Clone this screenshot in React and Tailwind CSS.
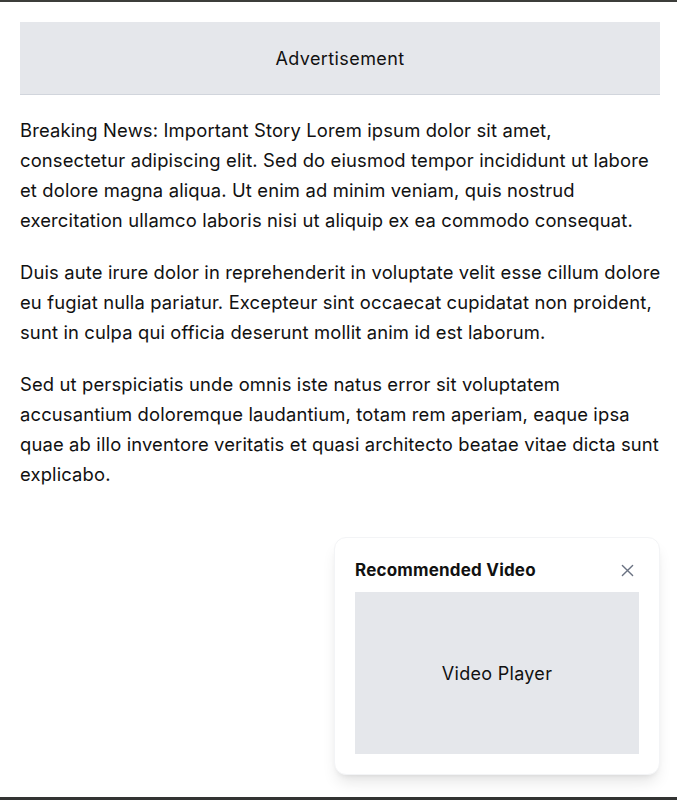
import React from "react";

const paras = [
  [
    "Breaking News: Important Story Lorem ipsum dolor sit amet,",
    "consectetur adipiscing elit. Sed do eiusmod tempor incididunt ut labore",
    "et dolore magna aliqua. Ut enim ad minim veniam, quis nostrud",
    "exercitation ullamco laboris nisi ut aliquip ex ea commodo consequat.",
  ],
  [
    "Duis aute irure dolor in reprehenderit in voluptate velit esse cillum dolore",
    "eu fugiat nulla pariatur. Excepteur sint occaecat cupidatat non proident,",
    "sunt in culpa qui officia deserunt mollit anim id est laborum.",
  ],
  [
    "Sed ut perspiciatis unde omnis iste natus error sit voluptatem",
    "accusantium doloremque laudantium, totam rem aperiam, eaque ipsa",
    "quae ab illo inventore veritatis et quasi architecto beatae vitae dicta sunt",
    "explicabo.",
  ],
];

export default function App() {
  const font = { fontFamily: "Inter, 'Noto Sans', sans-serif" };
  return (
    <div className="min-h-[800px] bg-white text-[#111] border-t-2 border-[#3c3d3a] pt-5 pb-5 pl-5 pr-[17px] relative" style={font}>
      <div className="h-[73px] bg-gray-200 border-b border-gray-300 flex items-center justify-center text-[18px] tracking-[0.4px] mb-5">
        Advertisement
      </div>
      <div className="flex flex-col gap-[22px]">
        {paras.map((lines, i) => (
          <p key={i} className="text-[18.4px] tracking-[0.15px] leading-[30px]">
            {lines.map((l, j) => (
              <span key={j} className="block whitespace-nowrap">{l}</span>
            ))}
          </p>
        ))}
      </div>

      <div className="absolute left-[334px] top-[535px] w-[326px] bg-white border border-gray-100 rounded-xl shadow-lg p-5">
        <div className="flex items-center justify-between mb-[10px] h-6 pt-[1px]">
          <span className="text-[17px] font-bold tracking-[0.2px]">Recommended Video</span>
          <svg width="13" height="13" viewBox="0 0 14 14" className="mr-[5px] text-gray-500">
            <path d="M1.5 1.5 L12.5 12.5 M12.5 1.5 L1.5 12.5" stroke="currentColor" strokeWidth="1.5" strokeLinecap="round" />
          </svg>
        </div>
        <div className="h-[162px] bg-gray-200 flex items-center justify-center text-[18px] tracking-[0.3px]">
          Video Player
        </div>
      </div>

      <div className="absolute left-0 right-0 top-[795px] h-[5px] bg-[#333433]" />
    </div>
  );
}
